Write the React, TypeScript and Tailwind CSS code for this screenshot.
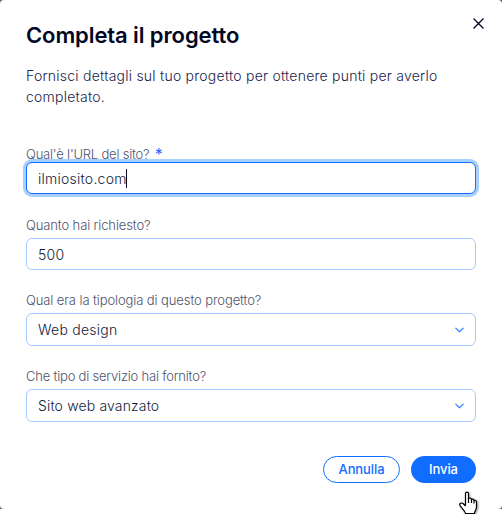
import React from 'react'

interface SelectProps {
    label: string,
    value: string,
    labelClass: string,
    valueClass: string
}

const Chevron: React.FC = () => (
    <svg className="w-[9px] h-[6px]" viewBox="0 0 9 6" fill="none" stroke="#2b7bff" strokeWidth="1.2">
        <path d="M0.4 0.9L4.5 4.6L8.6 0.9" />
    </svg>
)

const Label: React.FC<{ children: React.ReactNode, className: string }> = ({ children, className }) => (
    <label className={`block h-[18px] text-[13px] leading-[18px] font-light text-[#50526c] whitespace-nowrap ${className}`}>{children}</label>
)

const Select: React.FC<SelectProps> = ({ label, value, labelClass, valueClass }) => (
    <div>
        <Label className={labelClass}>{label}</Label>
        <div className="mt-[4px] h-[33px] flex items-center justify-between border border-[#a8caff] rounded-[6px] px-[11px]">
            <span className={`text-[14px] font-light text-[#131a3c] ${valueClass}`}>{value}</span>
            <Chevron />
        </div>
    </div>
)

const HandCursor: React.FC = () => (
    <svg className="absolute left-[458px] top-[490px] w-[22px] h-[24px] drop-shadow-[1px_1px_1px_rgba(0,0,0,0.4)]" viewBox="0 0 22 24" fill="white" stroke="black" strokeWidth="1.2" strokeLinejoin="round">
        <path d="M7.5 15.5V3.500C7.500 1.700 10.500 1.700 10.500 3.500V8.500C11 7.700 13.500 7.900 13.500 9.500C14 8.700 16 9.100 16 10.500C17 9.900 18.500 10.500 18.500 12V17C18.500 20 16.500 21 16.500 23.500H7.500C7 20.500 3.500 18 2 15.500C1 13.700 3.300 12.300 5 13.500L7.500 16" />
        <path d="M10.500 8V13M13.500 9V13M16 10.500V13.500" fill="none" />
    </svg>
)

const App: React.FC = () => {
    return (
        <div className="w-[502px] h-[514px] bg-white overflow-hidden font-['Inter',sans-serif] text-[#20244a]">
            <div className="bg-[#50636f] h-[509px]">
                <div className="relative h-full bg-white rounded-[4px] px-[26px] pt-[21px]">
                    <button className="absolute right-[18px] top-[18px]" aria-label="Chiudi">
                        <svg className="w-[11px] h-[11px]" viewBox="0 0 11 11" fill="none" stroke="#000624" strokeWidth="1.3">
                            <path d="M0.5 0.5L10.5 10.5M10.5 0.5L0.5 10.5" />
                        </svg>
                    </button>
                    <h1 className="h-[28px] text-[22px] leading-[28px] font-semibold tracking-[-0.1px] text-[#000624]">Completa il progetto</h1>
                    <p className="mt-[16px] h-[42px] text-[14px] leading-[21px] font-light tracking-[0.235px] whitespace-nowrap">
                        Fornisci dettagli sul tuo progetto per ottenere punti per averlo<br />completato.
                    </p>

                    {/* the focus ring touches the bottom of this label */}
                    <div className="mt-[38px]">
                        <Label className="tracking-[-0.21px]">
                            Qual'è l'URL del sito? <span className="relative top-px ml-[2px] text-[16px] leading-none font-normal text-[#116dff]">*</span>
                        </Label>
                        <div className="relative -mt-px h-[32px] flex items-center bg-white border border-[#116dff] rounded-[6px] pl-[11px] shadow-[0_0_0_3px_#a8d0ff]">
                            <span className="text-[14px] font-light tracking-[0.25px] text-[#131a3c]">ilmiosito.com</span>
                            <span className="-ml-px w-px h-[19px] bg-[#000624]"></span>
                        </div>
                    </div>
                    <div className="mt-[22px]">
                        <Label className="tracking-[-0.12px]">Quanto hai richiesto?</Label>
                        <div className="mt-[4px] h-[32px] flex items-center border border-[#a8caff] rounded-[6px] pl-[11px]">
                            <span className="text-[14px] font-light tracking-[0.3px] text-[#131a3c]">500</span>
                        </div>
                    </div>
                    <div className="mt-[21px]">
                        <Select label="Qual era la tipologia di questo progetto?" value="Web design" labelClass="tracking-[-0.1px]" valueClass="tracking-[0.25px]" />
                    </div>
                    <div className="mt-[21px]">
                        <Select label="Che tipo di servizio hai fornito?" value="Sito web avanzato" labelClass="tracking-[-0.2px]" valueClass="tracking-[0.15px]" />
                    </div>

                    <div className="mt-[34px] flex justify-end gap-[11px] text-[13px] font-medium tracking-[-0.1px]">
                        <button className="w-[77px] h-[27px] rounded-full border border-[#116dff] text-[#116dff]">Annulla</button>
                        <button className="w-[65px] h-[27px] rounded-full bg-[#116dff] text-white">Invia</button>
                    </div>

                    <HandCursor />
                </div>
            </div>
        </div>
    )
}
export default App
